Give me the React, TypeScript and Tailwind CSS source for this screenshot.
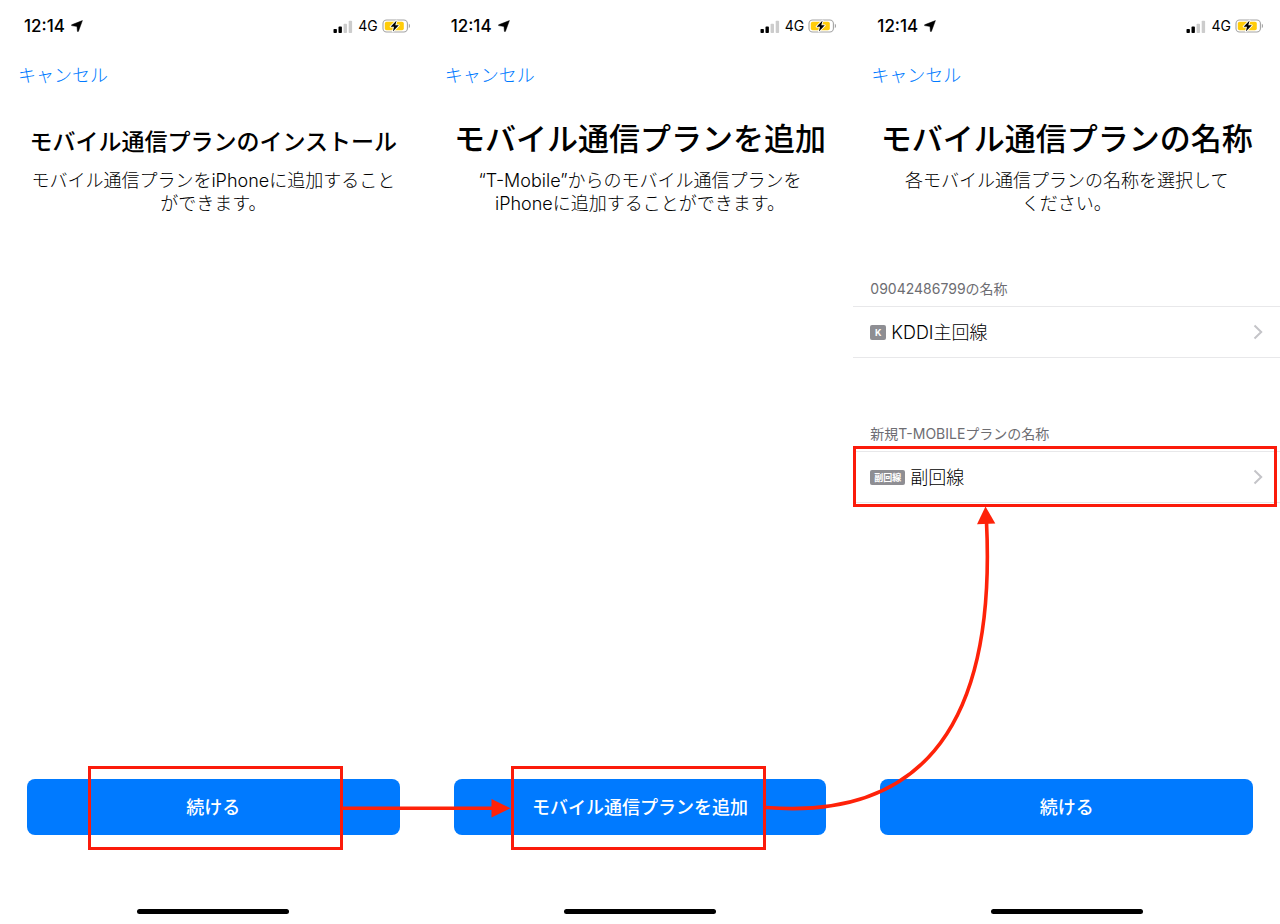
import React from 'react';

type PhoneProps = {
  title: string;
  titleClass: string;
  lines: string[];
  action: string;
  highlight?: string;
  children?: React.ReactNode;
};

function LocationIcon() {
  return (
    <svg width="12" height="12" viewBox="0 0 12 12" className="ml-[6px]" aria-hidden="true">
      <path d="M11.4 0.6 L7.4 11.4 L6.4 11.4 L6 6.4 L0.6 5.6 L0.6 4.8 Z" fill="#000" stroke="#000" strokeWidth="0.5" strokeLinejoin="round" />
    </svg>
  );
}

function SignalIcon() {
  return (
    <svg width="20" height="13" viewBox="0 0 20 13" aria-hidden="true">
      <rect x="0.5" y="9" width="3.4" height="4" rx="0.8" fill="#000" />
      <rect x="5.5" y="6.6" width="3.4" height="6.4" rx="0.8" fill="#000" />
      <rect x="10.6" y="3.8" width="3.4" height="9.2" rx="0.8" fill="#ccc" />
      <rect x="15.7" y="0.8" width="3.4" height="12.2" rx="0.8" fill="#ccc" />
    </svg>
  );
}

function BatteryIcon() {
  return (
    <svg width="29" height="14" viewBox="0 0 29 14" aria-hidden="true">
      <rect x="1" y="1" width="24.4" height="12" rx="3.6" fill="#fff" stroke="#a3a3a3" strokeWidth="1.1" />
      <rect x="2.8" y="2.8" width="19" height="8.4" rx="1.8" fill="#ffcc0a" />
      <path d="M26.8 4.8 C28.4 5.4 28.4 8.6 26.8 9.2 Z" fill="#a3a3a3" />
      <path d="M14.6 1.6 L8.6 7.7 L12 7.7 L10.9 12.4 L16.8 6.3 L13.3 6.3 Z" fill="#000" stroke="#fff" strokeWidth="1.8" paintOrder="stroke" strokeLinejoin="round" />
    </svg>
  );
}

function StatusBar() {
  return (
    <div className="flex h-[52px] items-center justify-between pl-6 pr-4">
      <div className="flex items-center text-[17px] leading-5 font-medium text-black">
        12:14
        <LocationIcon />
      </div>
      <div className="flex items-center">
        <SignalIcon />
        <span className="ml-[5px] mr-1 text-sm leading-5 text-black">4G</span>
        <BatteryIcon />
      </div>
    </div>
  );
}

function Phone({ title, titleClass, lines, action, highlight, children }: PhoneProps) {
  return (
    <section className="flex min-w-0 flex-col">
      <StatusBar />
      <nav className="flex h-12 items-center px-[18px]">
        <button type="button" className="text-lg leading-6 font-light text-[#007aff]">キャンセル</button>
      </nav>
      <header className="mt-[19px] text-center text-black">
        <h1 className={`h-[50px] whitespace-nowrap font-medium ${titleClass}`}>{title}</h1>
        <p className="text-lg leading-[23px] font-light">
          {lines.map((line) => (
            <span key={line} className="block whitespace-nowrap">{line}</span>
          ))}
        </p>
      </header>
      {children}
      <footer className="mt-auto flex flex-col items-center px-[27px] pb-[10px] pt-10">
        <div className="relative w-full">
          <button type="button" className="h-14 w-full rounded-lg bg-[#007aff] pt-px text-lg font-medium text-white">{action}</button>
          {highlight && <div className={`pointer-events-none absolute border-[3px] border-[#fb1b0b] ${highlight}`} />}
        </div>
        <div className="mt-[74px] h-[5px] w-[152px] rounded-full bg-black" />
      </footer>
    </section>
  );
}

type LineGroupProps = { label: string; badge: string; name: string; marked?: boolean };

function LineGroup({ label, badge, name, marked }: LineGroupProps) {
  return (
    <div>
      <h2 className="mb-[7px] px-[17px] text-sm leading-5 text-[#6d6d72]">{label}</h2>
      <div className="relative">
        <button type="button" className="flex h-[52px] w-full items-center border-y border-[#e8e8ea] px-[17px] text-left">
          <span className="flex h-[15px] min-w-4 items-center justify-center rounded-xs bg-[#8e8e93] px-1 text-[9px] leading-[15px] font-bold text-white">{badge}</span>
          <span className="ml-[5px] pt-px text-lg leading-6 font-light text-black">{name}</span>
          <svg width="10" height="16" viewBox="0 0 10 16" className="ml-auto" aria-hidden="true">
            <path d="M1.5 1.5 L8.2 8 L1.5 14.5" fill="none" stroke="#c4c4c8" strokeWidth="2" />
          </svg>
        </button>
        {marked && <div className="pointer-events-none absolute -top-[5px] -bottom-1 left-0 right-[3px] border-[3px] border-[#fb1b0b]" />}
      </div>
    </div>
  );
}

// Flow arrows running from one step to the next
function Arrows() {
  return (
    <svg viewBox="0 0 1280 924" preserveAspectRatio="none" className="pointer-events-none absolute inset-0 h-full w-full" aria-hidden="true">
      <g fill="none" stroke="#fe2209" strokeWidth="3.6">
        <path d="M342 808.3 H494" />
        <path d="M766 807.5 C910 819 997 740 986.5 522" />
      </g>
      <path d="M491.5 799 L510.5 808.3 L491.5 817.6 Z" fill="#fe2209" />
      <path d="M985.5 506.5 L995.3 523.6 L977 524.2 Z" fill="#fe2209" />
    </svg>
  );
}

export default function App() {
  return (
    <main className="relative grid min-h-screen grid-cols-3 bg-white font-['Inter','Noto_Sans_CJK_JP',sans-serif]" lang="ja">
      <Phone
        title="モバイル通信プランのインストール"
        titleClass="text-[23px] leading-[46px]"
        lines={['モバイル通信プランをiPhoneに追加すること', 'ができます。']}
        action="続ける"
        highlight="-top-[13px] -bottom-[15px] left-[61px] right-[57px]"
      />
      <Phone
        title="モバイル通信プランを追加"
        titleClass="text-[31px] leading-10"
        lines={['“T-Mobile”からのモバイル通信プランを', 'iPhoneに追加することができます。']}
        action="モバイル通信プランを追加"
        highlight="-top-[13px] -bottom-[15px] left-[57px] right-[60px]"
      />
      <Phone
        title="モバイル通信プランの名称"
        titleClass="text-[31px] leading-10"
        lines={['各モバイル通信プランの名称を選択して', 'ください。']}
        action="続ける"
      >
        <div className="mt-16 flex flex-col gap-[66px]">
          <LineGroup label="09042486799の名称" badge="K" name="KDDI主回線" />
          <LineGroup label="新規T-MOBILEプランの名称" badge="副回線" name="副回線" marked />
        </div>
      </Phone>
      <Arrows />
    </main>
  );
}
